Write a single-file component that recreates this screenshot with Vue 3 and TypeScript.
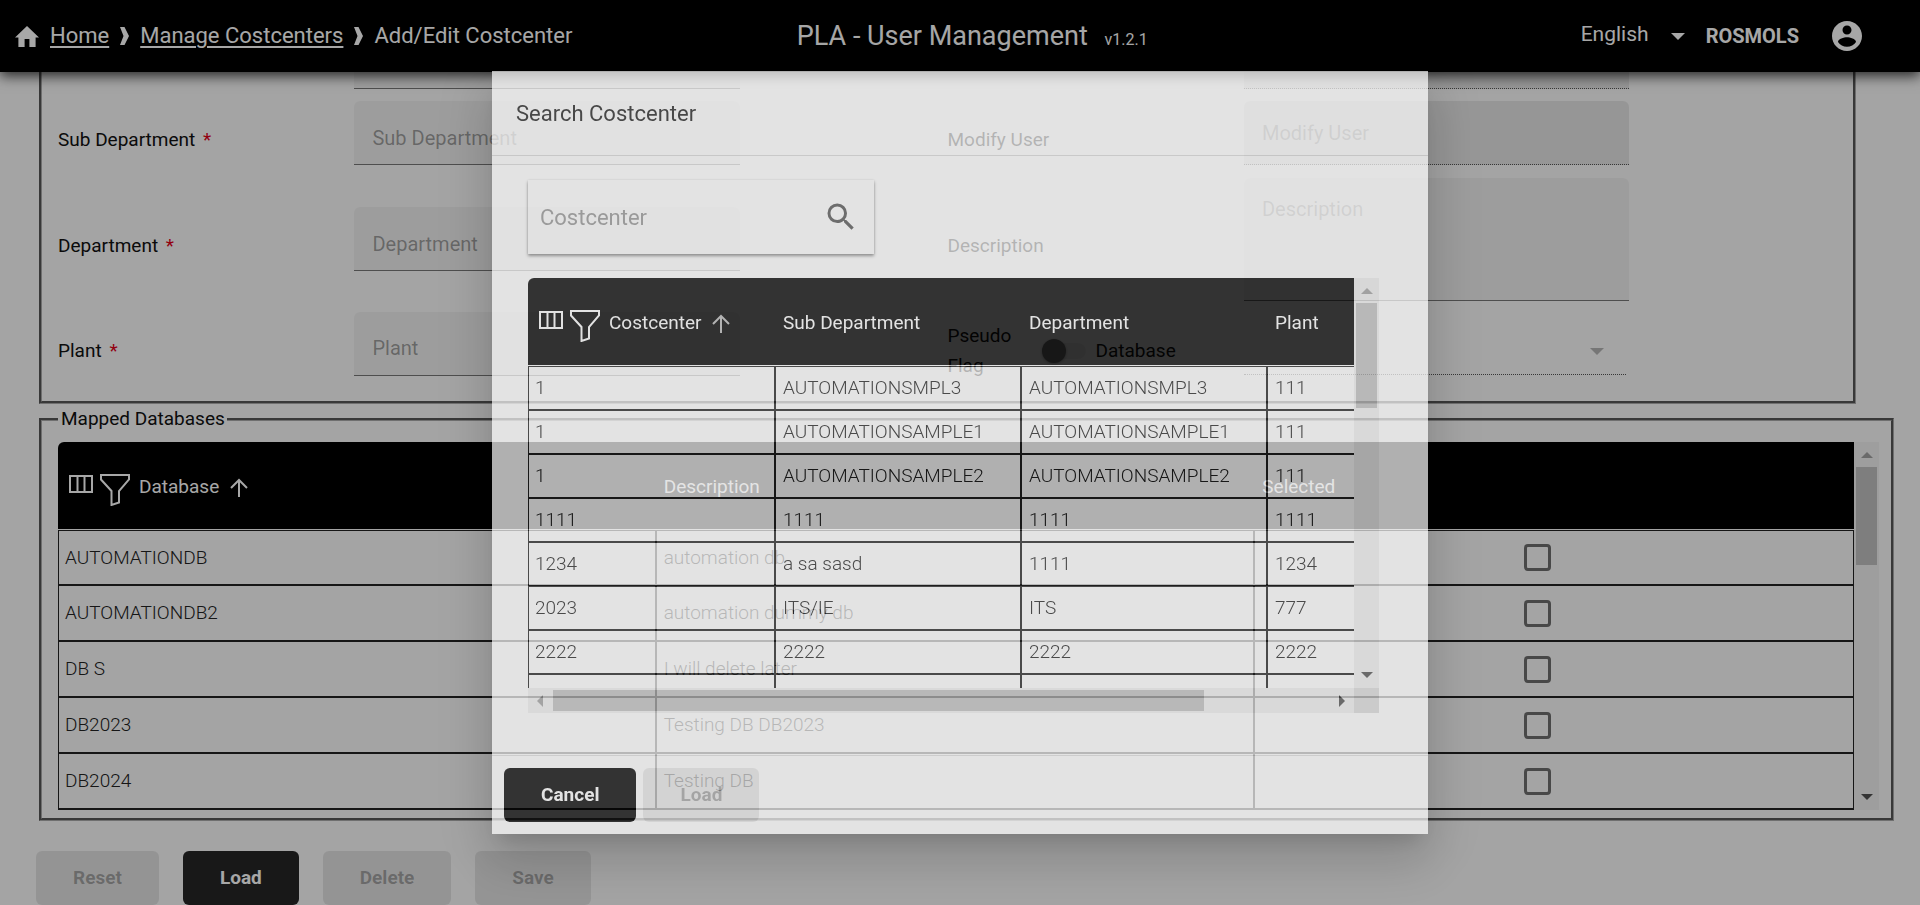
<script setup lang="ts">
import { ref } from 'vue'

interface DatabaseRow {
  name: string
  description: string
  selected: boolean
}

interface CostcenterRow {
  costcenter: string
  subDepartment: string
  department: string
  plant: string
}

const mandatoryFields: string[] = ['Sub Department', 'Department', 'Plant']

const databases = ref<DatabaseRow[]>([
  { name: 'AUTOMATIONDB', description: 'automation db', selected: false },
  { name: 'AUTOMATIONDB2', description: 'automation dummy db', selected: false },
  { name: 'DB S', description: 'I will delete later', selected: false },
  { name: 'DB2023', description: 'Testing DB DB2023', selected: false },
  { name: 'DB2024', description: 'Testing DB', selected: false },
])

const costcenters: CostcenterRow[] = [
  { costcenter: '1', subDepartment: 'AUTOMATIONSMPL3', department: 'AUTOMATIONSMPL3', plant: '111' },
  { costcenter: '1', subDepartment: 'AUTOMATIONSAMPLE1', department: 'AUTOMATIONSAMPLE1', plant: '111' },
  { costcenter: '1', subDepartment: 'AUTOMATIONSAMPLE2', department: 'AUTOMATIONSAMPLE2', plant: '111' },
  { costcenter: '1111', subDepartment: '1111', department: '1111', plant: '1111' },
  { costcenter: '1234', subDepartment: 'a sa sasd', department: '1111', plant: '1234' },
  { costcenter: '2023', subDepartment: 'ITS/IE', department: 'ITS', plant: '777' },
  { costcenter: '2222', subDepartment: '2222', department: '2222', plant: '2222' },
  { costcenter: '', subDepartment: '', department: '', plant: '' },
]

const language = ref('English')
const search = ref('')
const pseudo = ref(false)
</script>

<template>
  <div class="app">
    <header class="topbar">
      <nav class="crumbs" aria-label="Breadcrumb">
        <svg class="home" viewBox="0 0 24 21" aria-hidden="true"><path d="M12 0 0 11.500h3.400V21h6.200v-8h4.800v8h6.200v-9.500H24z" /></svg>
        <a href="#">Home</a>
        <svg class="sep" viewBox="0 0 9 18" aria-hidden="true"><path d="M0 0h4.500L9 9l-4.500 9H0l3.500-9z" /></svg>
        <a href="#">Manage Costcenters</a>
        <svg class="sep" viewBox="0 0 9 18" aria-hidden="true"><path d="M0 0h4.500L9 9l-4.500 9H0l3.500-9z" /></svg>
        <span>Add/Edit Costcenter</span>
      </nav>
      <h1 class="title">PLA - User Management <small>v1.2.1</small></h1>
      <div class="account">
        <select v-model="language" class="language" aria-label="Language">
          <option>English</option>
        </select>
        <svg class="caret" viewBox="0 0 14 7" aria-hidden="true"><path d="M0 0h14L7 7z" /></svg>
        <strong>ROSMOLS</strong>
        <svg class="avatar" viewBox="0 0 24 24" aria-hidden="true">
          <path d="M12 2C6.480 2 2 6.480 2 12s4.480 10 10 10 10-4.480 10-10S17.520 2 12 2zm0 3c1.660 0 3 1.340 3 3s-1.340 3-3 3-3-1.340-3-3 1.340-3 3-3zm0 14.200c-2.500 0-4.710-1.280-6-3.220.030-1.990 4-3.080 6-3.080 1.990 0 5.970 1.090 6 3.080-1.290 1.940-3.500 3.220-6 3.220z" />
        </svg>
      </div>
    </header>

    <main class="page">
      <section class="panel form">
        <div class="col">
          <div class="row stub"><span class="label"></span><span class="field cut"></span></div>
          <div v-for="(name, i) in mandatoryFields" :key="name" class="row">
            <label class="label" :for="'f' + i">{{ name }} <i>*</i></label>
            <input :id="'f' + i" class="field text" type="text" :placeholder="name" />
          </div>
        </div>
        <div class="col">
          <div class="row stub"><span class="label"></span><span class="field cut locked"></span></div>
          <div class="row">
            <label class="label" for="modify">Modify User</label>
            <input id="modify" class="field locked" type="text" placeholder="Modify User" disabled />
          </div>
          <div class="row">
            <label class="label" for="desc">Description</label>
            <textarea id="desc" class="field area" placeholder="Description"></textarea>
          </div>
          <div class="row">
            <div class="label flag">
              <label class="flag-name" for="pseudo">Pseudo Flag</label>
              <input id="pseudo" v-model="pseudo" class="switch" type="checkbox" role="switch" />
              <label for="pseudo">Database</label>
            </div>
            <div class="pick">
              <select aria-label="Pseudo database" disabled><option></option></select>
              <svg class="caret" viewBox="0 0 14 7" aria-hidden="true"><path d="M0 0h14L7 7z" /></svg>
            </div>
          </div>
        </div>
      </section>

      <fieldset class="panel mapped">
        <legend>Mapped Databases</legend>
        <div class="scroller">
          <div class="viewport db-view">
            <table class="grid db">
              <thead>
                <tr>
                  <th>
                    <div class="head">
                      <svg class="cols" viewBox="0 0 24 18" aria-hidden="true"><path d="M1 1h22v16H1zM8.500 1v16M15.500 1v16" /></svg>
                      <svg class="funnel" viewBox="0 0 30 32" aria-hidden="true"><path d="M1 1h28v4.500L19 17v11.500L11.500 31V17L1 5.500z" /></svg>
                      <span>Database</span>
                      <svg class="sort" viewBox="0 0 18 19" aria-hidden="true"><path d="M9 19V2M1 10l8-8 8 8" /></svg>
                    </div>
                  </th>
                  <th>Description</th>
                  <th>Selected</th>
                </tr>
              </thead>
              <tbody>
                <tr v-for="row in databases" :key="row.name">
                  <td>{{ row.name }}</td>
                  <td>{{ row.description }}</td>
                  <td class="tick"><input v-model="row.selected" type="checkbox" :aria-label="row.name" /></td>
                </tr>
              </tbody>
            </table>
          </div>
          <div class="vbar db-bar" aria-hidden="true">
            <svg viewBox="0 0 12 6"><path class="off" d="M0 6h12L6 0z" /></svg>
            <span class="thumb"></span>
            <svg class="end" viewBox="0 0 12 6"><path d="M0 0h12L6 6z" /></svg>
          </div>
        </div>
      </fieldset>

      <div class="actions">
        <button type="button" disabled>Reset</button>
        <button type="button" class="focused">Load</button>
        <button type="button" disabled>Delete</button>
        <button type="button" disabled>Save</button>
      </div>
    </main>

    <div class="backdrop"></div>
    <div class="stage">
      <div class="dialog" role="dialog" aria-labelledby="dialog-title">
        <h2 id="dialog-title">Search Costcenter</h2>
        <div class="body">
          <div class="search">
            <input v-model="search" type="text" placeholder="Costcenter" aria-label="Costcenter" />
            <button type="button" aria-label="Search">
              <svg viewBox="0 0 24 24"><path d="M15.500 14h-.790l-.280-.270A6.471 6.471 0 0 0 16 9.500 6.500 6.500 0 1 0 9.500 16c1.610 0 3.090-.590 4.230-1.570l.270.280v.790l5 4.990L20.490 19l-4.990-5zm-6 0C7.010 14 5 11.990 5 9.500S7.010 5 9.500 5 14 7.010 14 9.500 11.990 14 9.500 14z" /></svg>
            </button>
          </div>
          <div class="scroller">
            <div class="viewport cc-view">
              <table class="grid cc">
                <thead>
                  <tr>
                    <th>
                      <div class="head">
                        <svg class="cols" viewBox="0 0 24 18" aria-hidden="true"><path d="M1 1h22v16H1zM8.500 1v16M15.500 1v16" /></svg>
                        <svg class="funnel" viewBox="0 0 30 32" aria-hidden="true"><path d="M1 1h28v4.500L19 17v11.500L11.500 31V17L1 5.500z" /></svg>
                        <span>Costcenter</span>
                        <svg class="sort dim" viewBox="0 0 18 19" aria-hidden="true"><path d="M9 19V2M1 10l8-8 8 8" /></svg>
                      </div>
                    </th>
                    <th>Sub Department</th>
                    <th>Department</th>
                    <th>Plant</th>
                  </tr>
                </thead>
                <tbody>
                  <tr v-for="(row, i) in costcenters" :key="i">
                    <td>{{ row.costcenter }}</td>
                    <td>{{ row.subDepartment }}</td>
                    <td>{{ row.department }}</td>
                    <td>{{ row.plant }}</td>
                  </tr>
                </tbody>
              </table>
            </div>
            <div class="vbar cc-bar" aria-hidden="true">
              <svg viewBox="0 0 12 6"><path class="off" d="M0 6h12L6 0z" /></svg>
              <span class="thumb"></span>
              <svg class="end" viewBox="0 0 12 6"><path d="M0 0h12L6 6z" /></svg>
            </div>
            <div class="hbar" aria-hidden="true">
              <svg viewBox="0 0 6 12"><path class="off" d="M6 0v12L0 6z" /></svg>
              <span class="thumb"></span>
              <svg class="end" viewBox="0 0 6 12"><path d="M0 0v12l6-6z" /></svg>
            </div>
            <div class="corner"></div>
          </div>
        </div>
        <footer>
          <button type="button">Cancel</button>
          <button type="button" disabled>Load</button>
        </footer>
      </div>
    </div>
  </div>
</template>

<style>
body {
  margin: 0;
  background: #fafafa;
}
</style>

<style scoped>
.app,
.app * {
  box-sizing: border-box;
}

.app {
  height: 100vh;
  overflow: hidden;
  background: #fafafa;
  color: #111;
  font: 400 19px/30px Roboto, "Liberation Sans", sans-serif;
}

input,
textarea,
select,
button {
  font: inherit;
  color: inherit;
}

/* top bar */
.topbar {
  position: relative;
  z-index: 1;
  display: flex;
  align-items: center;
  height: 72px;
  background: #000;
  color: #fff;
  box-shadow: 0 4px 12px rgba(0, 0, 0, 0.75);
}

.topbar svg {
  fill: currentColor;
  flex: none;
}

.crumbs {
  display: flex;
  align-items: center;
  flex: 0 0 41.5%;
  gap: 11px;
  padding-left: 15px;
  font-size: 22px;
  white-space: nowrap;
}

.crumbs a {
  color: inherit;
  text-decoration: underline;
  text-underline-offset: 3px;
}

.home {
  width: 24px;
  height: 21px;
}

.sep {
  width: 9px;
  height: 18px;
}

.title {
  margin: 0;
  padding-top: 4px;
  font-size: 27px;
  font-weight: 400;
  white-space: nowrap;
}

.title small {
  margin-left: 10px;
  font-size: 16px;
}

.account {
  display: flex;
  align-items: center;
  margin-left: auto;
  padding-right: 55px;
}

.language {
  appearance: none;
  width: 90px;
  padding: 0 0 4px;
  border: 0;
  background: transparent;
  font-size: 21px;
}

.caret {
  width: 14px;
  height: 7px;
}

.account strong {
  margin: 0 30px 0 21px;
  font-size: 20px;
}

.avatar {
  width: 36px;
  height: 36px;
}

/* form panel */
.panel {
  min-width: 0;
  margin: 0;
  border: 3px groove #aaa;
}

.form {
  display: flex;
  margin: 0 64px 0 39px;
  border-top: 0;
  padding: 0 16px;
}

.col {
  flex: 1 1 50%;
  min-width: 0;
}

.row {
  display: flex;
  align-items: center;
  height: 106px;
}

.row:last-child {
  height: 103px;
}

.row.stub {
  align-items: flex-start;
  height: 14px;
}

.label {
  flex: 0 0 33.33%;
  padding-top: 2px;
}

.label i {
  margin-left: 3px;
  color: #e00018;
  font-style: normal;
}

.field {
  flex: 0 0 43.33%;
  height: 64px;
  margin: 0 0 12px;
  padding: 0 18px;
  border: 0;
  border-bottom: 1px solid #777;
  border-radius: 6px 6px 0 0;
  background: rgba(0, 0, 0, 0.04);
  font-size: 20px;
  outline: 0;
}

.field::placeholder {
  color: rgba(0, 0, 0, 0.36);
  opacity: 1;
}

.text {
  padding-top: 10px;
}

.locked {
  border-bottom: 1px dotted #555;
  background: rgba(0, 0, 0, 0.08);
}

.cut {
  height: 17px;
  border-radius: 0;
}

.area {
  height: 123px;
  padding-top: 16px;
  resize: none;
}

.flag {
  display: flex;
  align-items: center;
}

.flag-name {
  width: 94px;
  padding-right: 20px;
}

.switch {
  position: relative;
  appearance: none;
  width: 44px;
  height: 16px;
  margin: 0 10px 0 0;
  border-radius: 8px;
  background: rgba(0, 0, 0, 0.06);
}

.switch::before {
  content: "";
  position: absolute;
  top: -4px;
  left: 0;
  width: 24px;
  height: 24px;
  border-radius: 50%;
  background: #707070;
  box-shadow: 0 1px 3px rgba(0, 0, 0, 0.3);
}

.pick {
  position: relative;
  flex: 0 0 43%;
  height: 50px;
  border-bottom: 1px dotted #555;
}

.pick select {
  appearance: none;
  width: 100%;
  height: 100%;
  border: 0;
  background: transparent;
}

.pick .caret {
  position: absolute;
  right: 22px;
  top: 23px;
  fill: #b5b5b5;
}

/* mapped databases */
.mapped {
  margin: 0 26px 0 39px;
  padding: 8px 12px 8px 16px;
}

.mapped legend {
  padding: 0 2px 0 3px;
}

.scroller {
  display: grid;
  grid-template-columns: minmax(0, 1fr) 25px;
}

.viewport {
  overflow: hidden;
  border-top-left-radius: 6px;
}

.db-view {
  height: 368px;
}

.grid {
  width: 100%;
  border-spacing: 0;
  table-layout: fixed;
}

.grid th {
  height: 87px;
  padding: 3px 7px 0;
  background: #000;
  color: #fff;
  font-weight: 400;
  text-align: left;
  white-space: nowrap;
}

.grid th:first-child {
  padding-left: 11px;
}

.grid tbody tr:first-child td {
  border-top: 1px solid #222;
}

.grid tbody::before {
  content: "";
  display: block;
  height: 1px;
}

.grid td {
  height: 56px;
  padding: 0 7px;
  border-right: 2px solid #222;
  border-bottom: 2px solid #222;
  color: #222;
  font-weight: 300;
}

.grid td:first-child {
  padding-left: 6px;
  border-left: 1px solid #222;
}

.db td:last-child {
  border-right-width: 1px;
}

.db .tick {
  padding: 0 34px 0 0;
}

.tick input {
  appearance: none;
  display: block;
  width: 27px;
  height: 27px;
  margin: 0 auto;
  border: 3px solid #6e6e6e;
  border-radius: 4px;
}

.head {
  display: flex;
  align-items: center;
}

.head svg {
  fill: none;
  stroke: #fff;
  stroke-width: 2;
  flex: none;
}

.head .cols {
  width: 24px;
  height: 18px;
  margin: 0 7px 6px 0;
}

.head .funnel {
  width: 30px;
  height: 32px;
  margin: 6px 9px 0 0;
}

.head .sort {
  width: 18px;
  height: 19px;
  margin-left: 11px;
}

.head .dim {
  stroke: #bbb;
}

/* scroll bars */
.vbar,
.hbar {
  display: flex;
  align-items: center;
  background: #f1f1f1;
}

.vbar {
  flex-direction: column;
  padding: 10px 0;
}

.vbar svg {
  width: 12px;
  height: 6px;
}

.hbar svg {
  width: 6px;
  height: 12px;
}

.vbar path,
.hbar path {
  fill: #505050;
}

.vbar .off,
.hbar .off {
  fill: #a3a3a3;
}

.thumb {
  background: #c1c1c1;
}

.vbar .thumb {
  width: 21px;
  height: 98px;
  margin-top: 9px;
}

.cc-bar .thumb {
  height: 105px;
}

.vbar .end {
  margin-top: auto;
}

.hbar {
  height: 25px;
  padding: 0 9px;
}

.hbar .thumb {
  width: 651px;
  height: 21px;
  margin-left: 10px;
}

.hbar .end {
  margin-left: auto;
}

.corner {
  background: #dcdcdc;
}

/* buttons */
.actions {
  display: flex;
  gap: 24px;
  padding: 30px 36px 0;
}

.actions button,
.dialog footer button {
  height: 54px;
  padding: 0 37px;
  border: 0;
  border-radius: 6px;
  background: #000;
  color: #fff;
  font-weight: 700;
}

.actions .focused {
  background: #262626;
}

.actions button:disabled,
.dialog footer button:disabled {
  background: rgba(0, 0, 0, 0.09);
  color: rgba(0, 0, 0, 0.29);
}

/* dialog */
.backdrop {
  position: fixed;
  inset: 0;
  z-index: 2;
  background: #000;
  opacity: 0.345;
}

.stage {
  position: fixed;
  inset: 0;
  z-index: 3;
  display: flex;
  align-items: center;
  justify-content: center;
}

.dialog {
  width: 936px;
  max-width: 90vw;
  background: #fff;
  opacity: 0.69;
  box-shadow:
    0 13px 18px -8px rgba(0, 0, 0, 0.2),
    0 29px 46px 4px rgba(0, 0, 0, 0.14),
    0 11px 55px 10px rgba(0, 0, 0, 0.12);
}

.dialog h2 {
  height: 85px;
  margin: 0;
  padding: 0 24px;
  border-bottom: 1px solid #dadada;
  color: #222;
  font-size: 22px;
  font-weight: 400;
  line-height: 86px;
}

.body {
  padding: 24px 49px 42px 36px;
}

.search {
  display: flex;
  align-items: center;
  width: 346px;
  height: 74px;
  margin-bottom: 24px;
  padding: 0 13px 0 12px;
  background: #fff;
  box-shadow: 0 2px 3px rgba(0, 0, 0, 0.45), 0 0 2px rgba(0, 0, 0, 0.12);
}

.search input {
  flex: 1;
  min-width: 0;
  padding: 2px 0 0;
  border: 0;
  background: transparent;
  outline: 0;
  font-size: 22px;
}

.search input::placeholder {
  color: #999;
  opacity: 1;
}

.search button {
  width: 38px;
  height: 38px;
  padding: 0;
  border: 0;
  background: transparent;
}

.search svg {
  display: block;
  width: 36px;
  height: 36px;
  fill: #555;
}

.cc-view {
  height: 410px;
}

.cc {
  width: 986px;
}

.cc th:first-child {
  width: 248px;
}

.cc td {
  height: 44px;
}

.cc tbody tr:first-child td {
  height: 45px;
}

.dialog footer {
  display: flex;
  gap: 7px;
  padding: 12px;
  border-top: 1px solid #dedede;
}
</style>
